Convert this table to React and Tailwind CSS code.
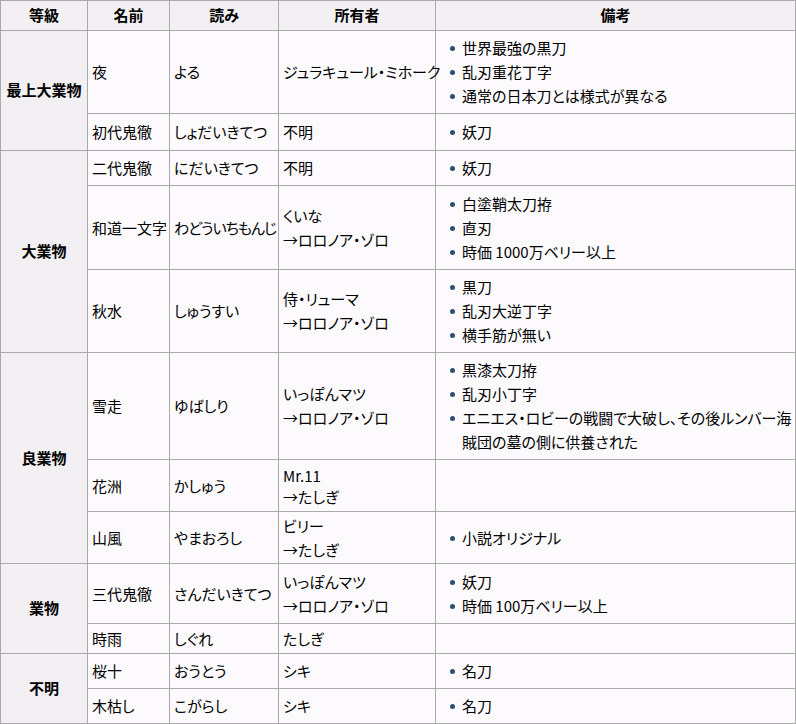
import React from "react";

const rows = [
  {
    grade: "最上大業物",
    span: 2,
    items: [
      { name: "夜", yomi: "よる", owner: ["ジュラキュール・ミホーク"], notes: ["世界最強の黒刀", "乱刃重花丁字", "通常の日本刀とは様式が異なる"], h: "h-[83px]" },
      { name: "初代鬼徹", yomi: "しょだいきてつ", owner: ["不明"], notes: ["妖刀"], h: "h-[37px]" },
    ],
  },
  {
    grade: "大業物",
    span: 3,
    items: [
      { name: "二代鬼徹", yomi: "にだいきてつ", owner: ["不明"], notes: ["妖刀"], h: "h-[35px]" },
      { name: "和道一文字", yomi: "わどういちもんじ", owner: ["くいな", "→ロロノア・ゾロ"], notes: ["白塗鞘太刀拵", "直刃", "時価 1000万ベリー以上"], h: "h-[84px]", tightYomi: true },
      { name: "秋水", yomi: "しゅうすい", owner: ["侍・リューマ", "→ロロノア・ゾロ"], notes: ["黒刀", "乱刃大逆丁字", "横手筋が無い"], h: "h-[83px]" },
    ],
  },
  {
    grade: "良業物",
    span: 3,
    items: [
      { name: "雪走", yomi: "ゆばしり", owner: ["いっぽんマツ", "→ロロノア・ゾロ"], notes: ["黒漆太刀拵", "乱刃小丁字", ["エニエス・ロビーの戦闘で大破し、その後ルンバー海", "賊団の墓の側に供養された"]], h: "h-[107px]" },
      { name: "花洲", yomi: "かしゅう", owner: ["Mr.11", "→たしぎ"], notes: [], h: "h-[52px]", tight: true },
      { name: "山風", yomi: "やまおろし", owner: ["ビリー", "→たしぎ"], notes: ["小説オリジナル"], h: "h-[52px]" },
    ],
  },
  {
    grade: "業物",
    span: 2,
    items: [
      { name: "三代鬼徹", yomi: "さんだいきてつ", owner: ["いっぽんマツ", "→ロロノア・ゾロ"], notes: ["妖刀", "時価 100万ベリー以上"], h: "h-[60px]" },
      { name: "時雨", yomi: "しぐれ", owner: ["たしぎ"], notes: [], h: "h-[30px]" },
    ],
  },
  {
    grade: "不明",
    span: 2,
    items: [
      { name: "桜十", yomi: "おうとう", owner: ["シキ"], notes: ["名刀"], h: "h-[35px]" },
      { name: "木枯し", yomi: "こがらし", owner: ["シキ"], notes: ["名刀"], h: "h-[34px]" },
    ],
  },
];

const th = "border border-[#aaaaaa] bg-[#f2f0f2] font-bold text-center align-middle px-[3px] text-[15px]";
const td = "border border-[#aaaaaa] bg-[#fcfafc] align-middle pl-[4px] pr-[2px] py-0 text-[15px] leading-[24px] whitespace-nowrap";

function Notes({ notes }) {
  if (!notes.length) return null;
  return (
    <ul className="py-[5px] pl-[10px]">
      {notes.map((n, i) => (
        <li key={i} className="flex items-start">
          <span className="mt-[10px] mr-[7px] h-[5px] w-[5px] shrink-0 rounded-full bg-[#2b4f74]" />
          <span>
            {Array.isArray(n)
              ? n.map((l, j) => (
                  <span key={j} className="block">
                    {l}
                  </span>
                ))
              : n}
          </span>
        </li>
      ))}
    </ul>
  );
}

export default function App() {
  return (
    <div
      className="bg-white text-black"
      style={{ fontFamily: '"Noto Sans CJK JP", "Noto Sans", sans-serif', fontFeatureSettings: '"palt"' }}
    >
      <table className="table-fixed border-collapse w-[795px]">
        <colgroup>
          <col className="w-[87px]" />
          <col className="w-[82px]" />
          <col className="w-[109px]" />
          <col className="w-[157px]" />
          <col className="w-[360px]" />
        </colgroup>
        <thead>
          <tr className="h-[30px]">
            <th className={th}>等級</th>
            <th className={th}>名前</th>
            <th className={th}>読み</th>
            <th className={th}>所有者</th>
            <th className={th}>備考</th>
          </tr>
        </thead>
        <tbody>
          {rows.map((g) =>
            g.items.map((it, i) => (
              <tr key={g.grade + i} className={it.h}>
                {i === 0 && (
                  <th rowSpan={g.span} className={th}>
                    {g.grade}
                  </th>
                )}
                <td className={td}>{it.name}</td>
                <td className={td + (it.tightYomi ? " tracking-[-1px]" : "")}>{it.yomi}</td>
                <td className={td + (it.tight ? " !leading-[21px]" : "")}>
                  {it.owner.map((o, j) => (
                    <div key={j}>{o}</div>
                  ))}
                </td>
                <td className={td}>
                  <Notes notes={it.notes} />
                </td>
              </tr>
            ))
          )}
        </tbody>
      </table>
    </div>
  );
}
